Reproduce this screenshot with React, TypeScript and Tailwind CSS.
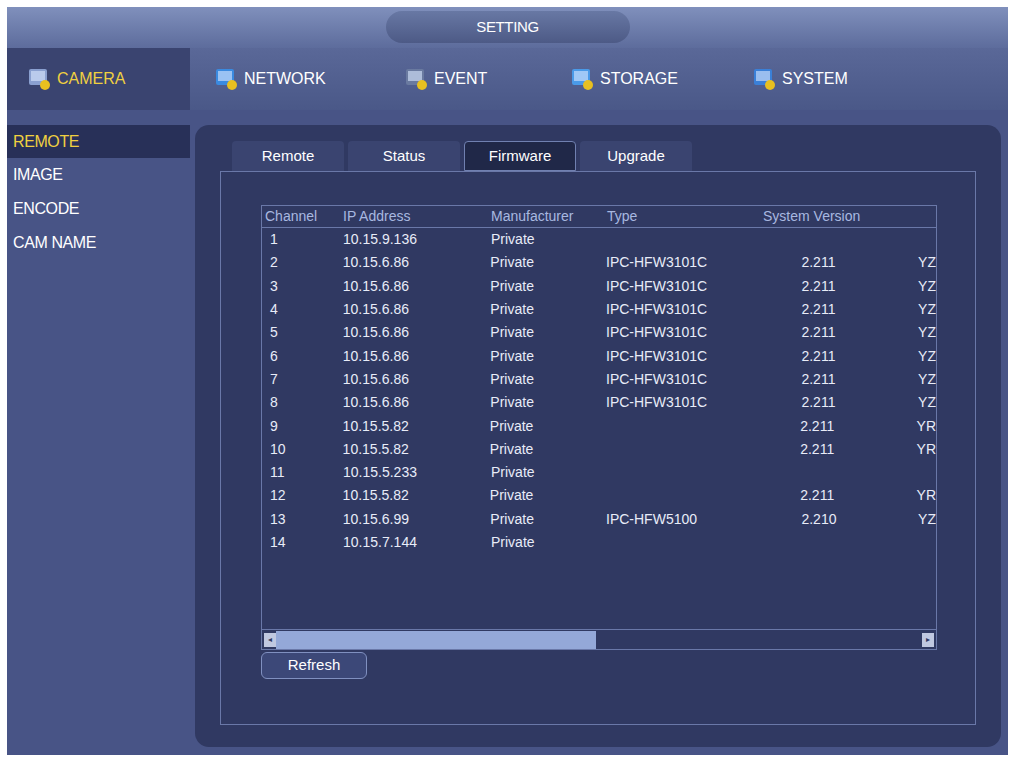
const rows = [
  ['1', '10.15.9.136', 'Private', '', '', ''],
  ['2', '10.15.6.86', 'Private', 'IPC-HFW3101C', '2.211', 'YZ'],
  ['3', '10.15.6.86', 'Private', 'IPC-HFW3101C', '2.211', 'YZ'],
  ['4', '10.15.6.86', 'Private', 'IPC-HFW3101C', '2.211', 'YZ'],
  ['5', '10.15.6.86', 'Private', 'IPC-HFW3101C', '2.211', 'YZ'],
  ['6', '10.15.6.86', 'Private', 'IPC-HFW3101C', '2.211', 'YZ'],
  ['7', '10.15.6.86', 'Private', 'IPC-HFW3101C', '2.211', 'YZ'],
  ['8', '10.15.6.86', 'Private', 'IPC-HFW3101C', '2.211', 'YZ'],
  ['9', '10.15.5.82', 'Private', '', '2.211', 'YR'],
  ['10', '10.15.5.82', 'Private', '', '2.211', 'YR'],
  ['11', '10.15.5.233', 'Private', '', '', ''],
  ['12', '10.15.5.82', 'Private', '', '2.211', 'YR'],
  ['13', '10.15.6.99', 'Private', 'IPC-HFW5100', '2.210', 'YZ'],
  ['14', '10.15.7.144', 'Private', '', '', ''],
];

const NavIcon = ({ c }: { c: string }) => (
  <svg width="26" height="24" viewBox="0 0 26 24" className="mr-1">
    <rect x="2" y="2" width="18" height="16" rx="2" fill={c} />
    <rect x="4" y="4" width="14" height="10" fill="#dbe8ff" opacity="0.6" />
    <circle cx="18" cy="18" r="5" fill="#e8c020" />
  </svg>
);

const tabs = ['Remote', 'Status', 'Firmware', 'Upgrade'];

export default function App() {
  return (
    <div className="w-[1015px] h-[762px] bg-white p-[7px]" style={{ fontFamily: '"Liberation Sans", Arial, sans-serif' }}>
      <div className="w-[1001px] h-[748px] bg-[#485486] flex flex-col text-white">
        <div className="h-[41px] bg-gradient-to-b from-[#8090bc] to-[#5d6c9c] flex justify-center items-start">
          <div className="w-[244px] h-[32px] mt-[4px] rounded-full bg-gradient-to-b from-[#6878a4] to-[#4d5a86] flex items-center justify-center text-[15px] tracking-tight">SETTING</div>
        </div>
        <div className="h-[62px] flex bg-gradient-to-b from-[#5a6898] to-[#4a5888]">
          <div className="w-[183px] bg-[#3a4470] flex items-center pl-[20px] text-[16px] text-[#f0d040]"><NavIcon c="#8aa0d0" />CAMERA</div>
          <div className="flex-1 flex items-center text-[16px]">
            <div className="w-[196px] pl-[24px] flex items-center"><NavIcon c="#3a8ae0" />NETWORK</div>
            <div className="w-[170px] pl-[18px] flex items-center"><NavIcon c="#6a7aa0" />EVENT</div>
            <div className="w-[188px] pl-[14px] flex items-center"><NavIcon c="#4a9ae8" />STORAGE</div>
            <div className="pl-[8px] flex items-center"><NavIcon c="#3a80d8" />SYSTEM</div>
          </div>
        </div>
        <div className="flex flex-1">
          <div className="w-[183px] pt-[15px] flex flex-col text-[16px] tracking-tight">
            <div className="h-[33px] bg-[#283058] text-[#f0d040] pl-[6px] flex items-center">REMOTE</div>
            <div className="h-[34px] pl-[6px] flex items-center">IMAGE</div>
            <div className="h-[34px] pl-[6px] flex items-center">ENCODE</div>
            <div className="h-[34px] pl-[6px] flex items-center">CAM NAME</div>
          </div>
          <div className="ml-[5px] mt-[15px] mb-[8px] w-[806px] rounded-[14px] bg-[#303962] px-[25px] pt-[16px] pb-[22px] flex flex-col">
            <div className="flex pl-[12px] gap-[4px] text-[15px]">
              {tabs.map((t) => (
                <div key={t} className={`h-[30px] w-[112px] flex items-center justify-center rounded-t ${t === 'Firmware' ? 'bg-[#202848] border border-[#7080b0]' : 'bg-[#3a4470]'}`}>{t}</div>
              ))}
            </div>
            <div className="flex-1 border border-[#6a78a8] pl-[40px] pr-[38px] pt-[33px]">
              <div className="h-[445px] border border-[#6a78a8] flex flex-col text-[14px] text-[#e8ecf8] overflow-hidden">
                <div className="h-[22px] flex items-center border-b border-[#6a78a8] text-[#a8b8e0] whitespace-nowrap">
                  <div className="w-[81px] pl-[3px]">Channel</div>
                  <div className="w-[148px]">IP Address</div>
                  <div className="w-[116px]">Manufacturer</div>
                  <div className="w-[156px]">Type</div>
                  <div>System Version</div>
                </div>
                <div className="flex-1">
                  {rows.map((r) => (
                    <div key={r[0]} className="h-[23.3px] flex items-center whitespace-nowrap">
                      <div className="w-[81px] pl-[8px]">{r[0]}</div>
                      <div className="w-[148px]">{r[1]}</div>
                      <div className="w-[116px]">{r[2]}</div>
                      <div className="w-[196px]">{r[3]}</div>
                      <div className="w-[117px]">{r[4]}</div>
                      <div>{r[5]}</div>
                    </div>
                  ))}
                </div>
                <div className="h-[20px] flex items-center border-t border-[#6a78a8] px-[2px]">
                  <div className="w-[12px] h-[14px] bg-[#c0c8e0] text-[8px] text-[#303962] flex items-center justify-center">◂</div>
                  <div className="w-[320px] h-[18px] bg-[#94a8d8]" />
                  <div className="flex-1" />
                  <div className="w-[12px] h-[14px] bg-[#c0c8e0] text-[8px] text-[#303962] flex items-center justify-center">▸</div>
                </div>
              </div>
              <div className="mt-[2px] w-[106px] h-[27px] rounded-md border border-[#8090c0] bg-[#3c4878] flex items-center justify-center text-[15px]">Refresh</div>
            </div>
          </div>
        </div>
      </div>
    </div>
  );
}
